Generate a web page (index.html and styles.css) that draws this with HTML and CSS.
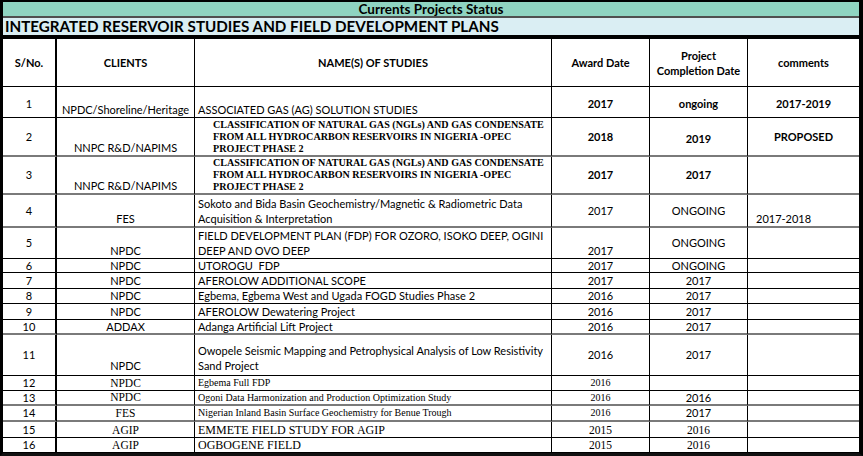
FILE: index.html
```html
<!DOCTYPE html>
<html>
<head>
<meta charset="utf-8">
<title>Currents Projects Status</title>
<link rel="stylesheet" href="styles.css">
</head>
<body>
<div class="sheet">
  <div class="title">Currents Projects Status</div>
  <div class="subtitle">INTEGRATED RESERVOIR STUDIES AND FIELD DEVELOPMENT PLANS</div>
  <table class="grid">
    <colgroup>
      <col class="c-sno"><col class="c-client"><col class="c-name"><col class="c-award"><col class="c-comp"><col class="c-com">
    </colgroup>
    <thead>
      <tr class="h48">
        <th>S/No.</th>
        <th>CLIENTS</th>
        <th>NAME(S) OF STUDIES</th>
        <th>Award Date</th>
        <th class="two">Project<br>Completion Date</th>
        <th>comments</th>
      </tr>
    </thead>
    <tbody>
      <tr class="h31">
        <td class="sno pt2">1</td>
        <td class="client">NPDC/Shoreline/Heritage</td>
        <td class="name">ASSOCIATED GAS (AG) SOLUTION STUDIES</td>
        <td class="mid b pt2">2017</td>
        <td class="mid b pt2">ongoing</td>
        <td class="mid b pt2">2017-2019</td>
      </tr>
      <tr class="h39 gsep">
        <td class="sno">2</td>
        <td class="client">NNPC R&amp;D/NAPIMS</td>
        <td class="name serifb">CLASSIFICATION OF NATURAL GAS (NGLs) AND GAS CONDENSATE<br>FROM ALL HYDROCARBON RESERVOIRS IN NIGERIA -OPEC<br>PROJECT PHASE 2</td>
        <td class="mid b">2018</td>
        <td class="mid b low">2019</td>
        <td class="mid b">PROPOSED</td>
      </tr>
      <tr class="h38 gsep">
        <td class="sno">3</td>
        <td class="client">NNPC R&amp;D/NAPIMS</td>
        <td class="name serifb">CLASSIFICATION OF NATURAL GAS (NGLs) AND GAS CONDENSATE<br>FROM ALL HYDROCARBON RESERVOIRS IN NIGERIA -OPEC<br>PROJECT PHASE 2</td>
        <td class="mid b">2017</td>
        <td class="mid b">2017</td>
        <td class="mid"></td>
      </tr>
      <tr class="h33 gsep">
        <td class="sno">4</td>
        <td class="client">FES</td>
        <td class="name l15">Sokoto and Bida Basin Geochemistry/Magnetic &amp; Radiometric Data<br>Acquisition &amp; Interpretation</td>
        <td class="mid">2017</td>
        <td class="mid">ONGOING</td>
        <td class="left-com">2017-2018</td>
      </tr>
      <tr class="h31">
        <td class="sno">5</td>
        <td class="client">NPDC</td>
        <td class="name l15">FIELD DEVELOPMENT PLAN (FDP) FOR OZORO, ISOKO DEEP, OGINI<br>DEEP AND OVO DEEP</td>
        <td class="ctr">2017</td>
        <td class="mid">ONGOING</td>
        <td></td>
      </tr>
      <tr class="h14">
        <td class="sno">6</td>
        <td class="client">NPDC</td>
        <td class="name">UTOROGU&nbsp; FDP</td>
        <td class="ctr">2017</td>
        <td class="ctr">ONGOING</td>
        <td></td>
      </tr>
      <tr class="h16">
        <td class="sno">7</td>
        <td class="client">NPDC</td>
        <td class="name">AFEROLOW ADDITIONAL SCOPE</td>
        <td class="ctr">2017</td>
        <td class="ctr">2017</td>
        <td></td>
      </tr>
      <tr class="h15">
        <td class="sno">8</td>
        <td class="client">NPDC</td>
        <td class="name">Egbema, Egbema West and Ugada FOGD Studies Phase 2</td>
        <td class="ctr">2016</td>
        <td class="ctr">2017</td>
        <td></td>
      </tr>
      <tr class="h16">
        <td class="sno">9</td>
        <td class="client">NPDC</td>
        <td class="name">AFEROLOW Dewatering Project</td>
        <td class="ctr">2016</td>
        <td class="ctr">2017</td>
        <td></td>
      </tr>
      <tr class="h15 gsep">
        <td class="sno">10</td>
        <td class="client">ADDAX</td>
        <td class="name">Adanga Artificial Lift Project</td>
        <td class="ctr">2016</td>
        <td class="ctr">2017</td>
        <td></td>
      </tr>
      <tr class="h41">
        <td class="sno">11</td>
        <td class="client pb2">NPDC</td>
        <td class="name l15 pb2">Owopele Seismic Mapping and Petrophysical Analysis of Low Resistivity<br>Sand Project</td>
        <td class="mid">2016</td>
        <td class="mid">2017</td>
        <td></td>
      </tr>
      <tr class="h15">
        <td class="sno">12</td>
        <td class="client serif">NPDC</td>
        <td class="name serif-s">Egbema Full FDP</td>
        <td class="ctr serif-s">2016</td>
        <td class="ctr"></td>
        <td></td>
      </tr>
      <tr class="h15 gsep">
        <td class="sno">13</td>
        <td class="client serif">NPDC</td>
        <td class="name serif-s">Ogoni Data Harmonization and Production Optimization Study</td>
        <td class="ctr serif-s">2016</td>
        <td class="ctr">2016</td>
        <td></td>
      </tr>
      <tr class="h16 gsep">
        <td class="sno">14</td>
        <td class="client serif">FES</td>
        <td class="name serif-s">Nigerian Inland Basin Surface Geochemistry for Benue Trough</td>
        <td class="ctr serif-s">2016</td>
        <td class="ctr">2017</td>
        <td></td>
      </tr>
      <tr class="h16">
        <td class="sno">15</td>
        <td class="client serif">AGIP</td>
        <td class="name serif-l">EMMETE FIELD STUDY FOR AGIP</td>
        <td class="ctr serif">2015</td>
        <td class="ctr serif">2016</td>
        <td></td>
      </tr>
      <tr class="h15">
        <td class="sno">16</td>
        <td class="client serif">AGIP</td>
        <td class="name serif-l">OGBOGENE FIELD</td>
        <td class="ctr serif">2015</td>
        <td class="ctr serif">2016</td>
        <td></td>
      </tr>
    </tbody>
  </table>
</div>
</body>
</html>
```
FILE: styles.css
```css
html, body {
  margin: 0;
  padding: 0;
  background: #ffffff;
}
body {
  font-family: Lato, "Open Sans", "Liberation Sans", sans-serif;
  color: #000;
  font-size: 11px;
}
.sheet {
  width: 863px;
  box-sizing: border-box;
  border-top: 2px solid #000;
  border-left: 3px solid #000;
  border-right: 4px solid #000;
  border-bottom: 3px solid #111;
}
.title {
  height: 14px;
  background: #8fd4c1;
  border-bottom: 2px solid #4f4f4f;
  font-weight: 700;
  font-size: 13.5px;
  line-height: 14px;
  text-align: center;
}
.subtitle {
  height: 17px;
  background: #daeef3;
  border-bottom: 4px solid #000;
  font-weight: 700;
  font-size: 15.2px;
  line-height: 17px;
  padding-left: 2px;
  white-space: nowrap;
  overflow: hidden;
}
.grid {
  width: 856px;
  table-layout: fixed;
  border-collapse: separate;
  border-spacing: 0;
}
.c-sno { width: 54px; }
.c-client { width: 138px; }
.c-name { width: 357px; }
.c-award { width: 98px; }
.c-comp { width: 98px; }
.c-com { width: 111px; }

.grid th, .grid td {
  box-sizing: border-box;
  padding: 0 3px;
  border-right: 1px solid #000;
  border-bottom: 1px solid #000;
  white-space: nowrap;
  overflow: hidden;
  vertical-align: bottom;
  font-size: 11px;
  line-height: 14px;
  text-align: center;
}
.grid th:first-child, .grid td:first-child { border-right-width: 2px; }
.grid th:last-child, .grid td:last-child { border-right: none; }
.grid th {
  font-weight: 700;
  vertical-align: middle;
}
.grid th.two { line-height: 15px; }

.h48 { height: 48px; }
.h41 { height: 41px; }
.h39 { height: 39px; }
.h38 { height: 38px; }
.h33 { height: 33px; }
.h31 { height: 31px; }
.h16 { height: 16px; }
.h15 { height: 15px; }
.h14 { height: 14px; }
.h14 td { line-height: 13px; }

.gsep td { border-bottom: 2px solid #7a7a7a; }
.h15.gsep td { line-height: 13px; }

.grid td.sno { vertical-align: middle; }
.grid td.name { text-align: left; padding-left: 3px; }
.grid td.mid { vertical-align: middle; }
.grid td.low { padding-top: 4px; }
.grid td.pt2 { padding-top: 3px; }
.grid td.b { font-weight: 700; }
.grid td.pb2 { padding-bottom: 2px; }
.grid td.left-com { text-align: left; padding-left: 8px; }
.grid td.l16 { line-height: 16px; }
.grid td.l15 { line-height: 15px; }

.grid td.serifb {
  font-family: "Liberation Serif", "Times New Roman", serif;
  font-weight: 700;
  font-size: 10.1px;
  line-height: 12px;
  padding-left: 18px;
  padding-bottom: 0;
}
.grid td.serif {
  font-family: "Liberation Serif", "Times New Roman", serif;
  font-size: 11.5px;
}
.grid td.serif-s {
  font-family: "Liberation Serif", "Times New Roman", serif;
  font-size: 10px;
}
.grid td.serif-l {
  font-family: "Liberation Serif", "Times New Roman", serif;
  font-size: 12px;
}
```
